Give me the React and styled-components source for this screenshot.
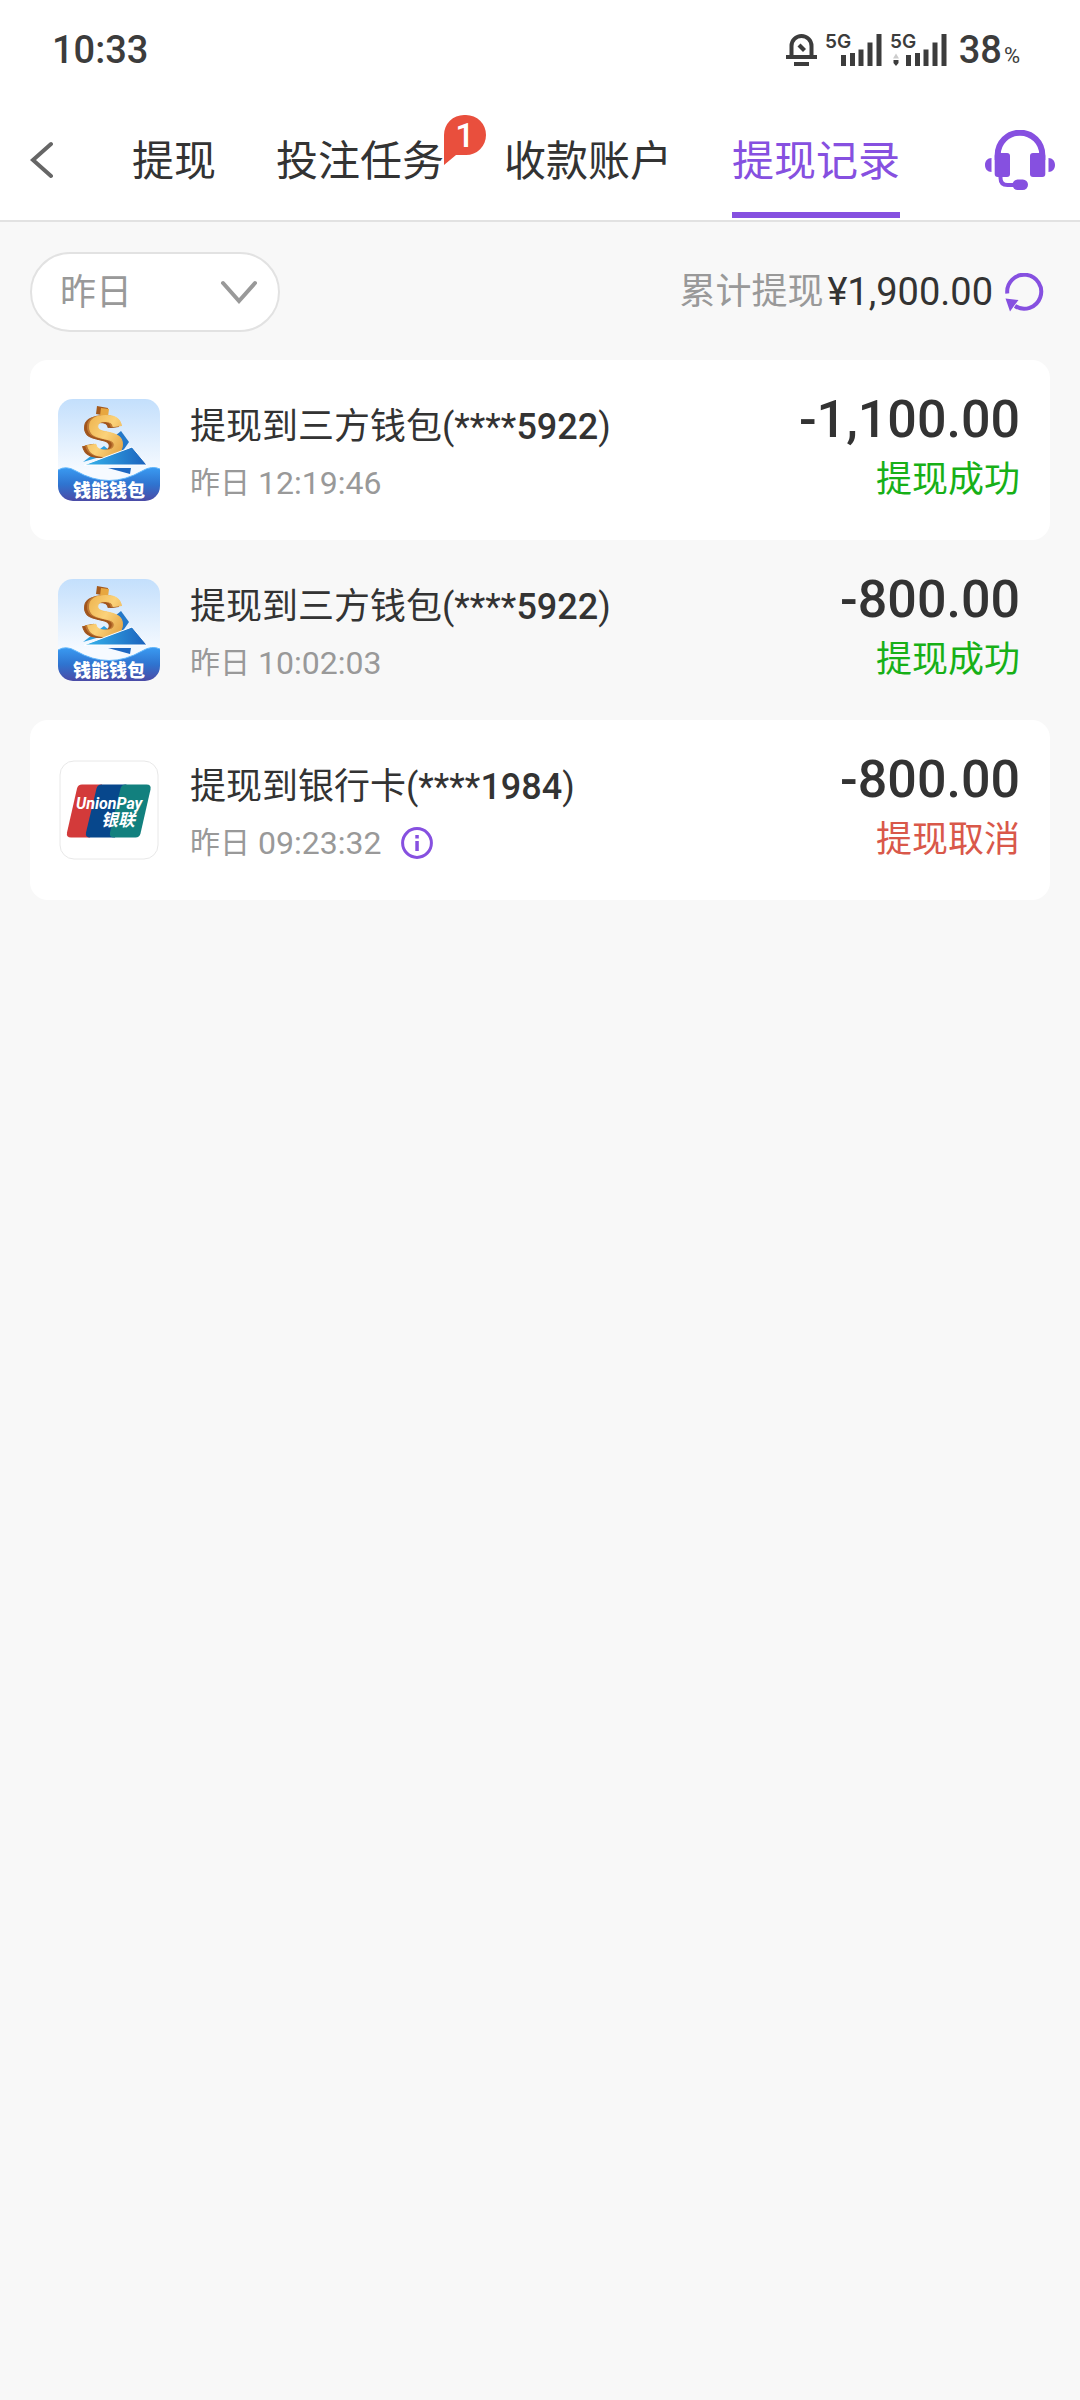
import React, { useState } from 'react';
import styled, { createGlobalStyle, ThemeProvider } from 'styled-components';

const theme = {
  purple: '#8650e0',
  red: '#e94f3d',
  cancel: '#d9584a',
  green: '#17b017',
  dark: '#333333',
  grey: '#999999',
  line: '#e2e2e2',
  page: '#f8f8f8',
};

const GlobalStyle = createGlobalStyle`
  * {
    box-sizing: border-box;
  }

  body {
    margin: 0;
    background: ${theme.page};
    color: ${theme.dark};
    font-family: Roboto, 'Noto Sans CJK SC', sans-serif;
  }

  button,
  select {
    padding: 0;
    border: 0;
    background: none;
    color: inherit;
    font: inherit;
    cursor: pointer;
  }

  svg {
    display: block;
    flex: none;
  }
`;

const StyledStatusBar = styled.div`
  display: flex;
  align-items: center;
  justify-content: space-between;
  height: 100px;
  padding: 0 60px 0 52px;
  background: #fff;
  color: #3c3c3c;
  font-size: 38px;
  font-weight: 500;
  line-height: 40px;

  .indicators {
    display: flex;
    align-items: center;
    gap: 8px;
  }

  .battery {
    display: flex;
    align-items: baseline;
    gap: 2px;
    margin-left: 4px;
  }

  .percent {
    font-size: 22px;
    font-weight: 400;
    line-height: 22px;
  }
`;

const StyledHeader = styled.header`
  display: flex;
  align-items: center;
  height: 122px;
  padding: 0 25px 0 30px;
  border-bottom: 2px solid ${({ theme }) => theme.line};
  background: #fff;

  .back {
    width: 100px;
  }

  .service {
    margin-left: auto;
  }
`;

const StyledTabs = styled.nav`
  display: flex;
  align-self: stretch;
  gap: 60px;
  padding: 0 2px;
`;

const StyledTab = styled.button`
  position: relative;
  height: 120px;
  padding-top: 4px;
  color: ${({ theme, $active }) => ($active ? theme.purple : theme.dark)};
  font-size: 42px;
  line-height: 60px;
  white-space: nowrap;

  &::after {
    content: '';
    position: absolute;
    right: 0;
    bottom: 2px;
    left: 0;
    height: 6px;
    background: ${({ theme, $active }) => ($active ? theme.purple : 'transparent')};
  }
`;

const StyledBadge = styled.span`
  position: absolute;
  top: 15px;
  left: 100%;
  width: 42px;
  height: 50px;
  color: #fff;
  font-size: 34px;
  font-weight: 500;
  line-height: 40px;
  text-align: center;

  svg {
    position: absolute;
    inset: 0;
  }

  span {
    position: relative;
  }
`;

const StyledFilterBar = styled.div`
  display: flex;
  align-items: center;
  justify-content: space-between;
  padding: 30px 36px 28px 30px;
`;

const StyledSelect = styled.label`
  display: grid;
  align-items: center;
  width: 250px;
  height: 80px;
  border: 2px solid ${({ theme }) => theme.line};
  border-radius: 40px;
  background: #fff;

  select,
  svg {
    grid-area: 1 / 1;
  }

  select {
    width: 100%;
    height: 100%;
    padding: 2px 28px 0;
    border-radius: 40px;
    outline: none;
    appearance: none;
    color: ${({ theme }) => theme.grey};
    font-size: 36px;
  }

  svg {
    justify-self: end;
    margin-right: 20px;
    pointer-events: none;
  }
`;

const StyledTotal = styled.div`
  display: flex;
  align-items: center;
  color: ${({ theme }) => theme.grey};
  font-size: 36px;
  line-height: 52px;

  strong {
    margin: 0 12px 0 4px;
    color: ${({ theme }) => theme.dark};
    font-size: 38px;
    font-weight: 400;
  }
`;

const StyledList = styled.ul`
  margin: 0;
  padding: 0 30px;
  list-style: none;
`;

const StyledRecord = styled.li`
  display: flex;
  align-items: center;
  height: 180px;
  padding: 0 30px 0 28px;
  border-radius: 18px;

  &:nth-child(odd) {
    background: #fff;
  }

  .info {
    flex: 1;
    margin-left: 30px;
    padding-top: 10px;
  }

  .result {
    text-align: right;
  }
`;

const StyledTitle = styled.div`
  font-size: 36px;
  line-height: 56px;

  b {
    font-weight: 500;
  }
`;

const StyledTime = styled.div`
  display: flex;
  align-items: center;
  gap: 8px;
  color: ${({ theme }) => theme.grey};
  font-size: 30px;
  line-height: 56px;

  time {
    font-size: 32px;
  }

  button {
    margin-left: 12px;
  }
`;

const StyledAmount = styled.div`
  font-size: 52px;
  font-weight: 500;
  line-height: 60px;
`;

const StyledState = styled.div`
  color: ${({ theme, $cancelled }) => ($cancelled ? theme.cancel : theme.green)};
  font-size: 36px;
  line-height: 60px;
`;

const MuteIcon = () => (
  <svg width="31" height="32" viewBox="0 0 31 32" fill="#3c3c3c">
    <path d="M5.500 22V12a10 10 0 0 1 20 0v10" fill="none" stroke="#3c3c3c" strokeWidth="4" />
    <path d="M0 21h31v4H0zM8 28h15v4H8z" />
    <path d="M11.500 12.500l3-3 5.500 5.500-3 3z" />
  </svg>
);

const SignalIcon = ({ activity }) => (
  <svg width="57" height="44" viewBox="0 -6 57 44" fill="#3c3c3c">
    <text x="0" y="14" fontFamily="Inter, sans-serif" fontSize="19" fontWeight="600">
      5G
    </text>
    {activity && (
      <>
        <path d="M3 24.500l3-5 3 5z" fill="#cccccc" />
        <path d="M3.500 26h5v3L6 32l-2.500-3z" />
      </>
    )}
    <path d="M16 21h5v11h-5zM25 19h5v13h-5zM33.500 15.500h5v16.500h-5zM42.500 8.500h5v23.500h-5zM51.500 0h5v32h-5z" />
  </svg>
);

const BackIcon = () => (
  <svg width="24" height="38" viewBox="0 0 24 38" fill="none">
    <path d="M21 3L3 19l18 16" stroke="#666666" strokeWidth="4" strokeLinecap="round" />
  </svg>
);

const HeadsetIcon = () => (
  <svg width="70" height="60" viewBox="0 0 70 60" fill={theme.purple}>
    <path
      d="M12.700 30v-5a22.300 22.300 0 0 1 44.600 0v5"
      fill="none"
      stroke={theme.purple}
      strokeWidth="6"
    />
    <rect x="9.700" y="23" width="15.300" height="24" rx="3" />
    <rect x="45" y="23" width="15.300" height="24" rx="3" />
    <path d="M6.500 28v14C2.500 42 0 39 0 35s2.500-7 6.500-7zM63.500 28v14c4 0 6.500-3 6.500-7s-2.500-7-6.500-7z" />
    <path d="M15.500 46v2q0 7 7 7H30" fill="none" stroke={theme.purple} strokeWidth="4" />
    <rect x="27.500" y="49.500" width="15.500" height="10.500" rx="5.200" />
  </svg>
);

const ArrowDownIcon = () => (
  <svg width="38" height="24" viewBox="0 0 38 24" fill="none">
    <path d="M3 3l16 18L35 3" stroke="#999999" strokeWidth="4" strokeLinecap="round" />
  </svg>
);

const RefreshIcon = () => (
  <svg width="39" height="39" viewBox="0 0 39 39">
    <path d="M2.300 20.500A17 17 0 1 1 10 33" fill="none" stroke={theme.purple} strokeWidth="4" />
    <path d="M.5 25.500l13 1.500-3.500 4.500-5 7z" fill={theme.purple} />
  </svg>
);

const InfoIcon = () => (
  <svg width="32" height="32" viewBox="0 0 32 32" fill={theme.purple}>
    <circle cx="16" cy="16" r="14.400" fill="none" stroke={theme.purple} strokeWidth="3" />
    <path d="M14.300 8h3.500v3.500h-3.500zM14.300 14h3.500v10h-3.500z" />
  </svg>
);

const StyledCoin = styled.text`
  font-family: 'Liberation Sans', sans-serif;
  font-size: 58px;
  font-weight: 700;
  filter: drop-shadow(-2px 0 0 #c07a35) drop-shadow(-3px 1px 0 #a0541c);
`;

const WalletLogo = () => (
  <svg width="102" height="102" viewBox="0 0 102 102">
    <defs>
      <linearGradient id="sky" x1="0" y1="0" x2="0" y2="1">
        <stop offset="0" stopColor="#c3dffc" />
        <stop offset="0.7" stopColor="#f6faff" />
      </linearGradient>
      <linearGradient id="wave" x1="0" y1="0" x2="0" y2="1">
        <stop offset="0" stopColor="#3a9bf2" />
        <stop offset="0.5" stopColor="#2f74d0" />
        <stop offset="1" stopColor="#4b4ba6" />
      </linearGradient>
      <linearGradient id="sail" x1="0" y1="0" x2="1" y2="0">
        <stop offset="0" stopColor="#35b4ec" />
        <stop offset="1" stopColor="#1c62bd" />
      </linearGradient>
      <linearGradient id="gold" x1="0" y1="0" x2="1" y2="1">
        <stop offset="0" stopColor="#e9a93f" />
        <stop offset="0.5" stopColor="#fbd27a" />
        <stop offset="1" stopColor="#d98f2b" />
      </linearGradient>
      <clipPath id="tile">
        <rect width="102" height="102" rx="15" />
      </clipPath>
    </defs>
    <g clipPath="url(#tile)">
      <rect width="102" height="102" fill="url(#sky)" />
      <path d="M51 42l12-10 8 11-9 13z" fill="#2478c8" />
      <path d="M25 63l21-16 9 7z" fill="#2b9fe0" />
      <path d="M39 7l11 2-1 8-11-2z" fill="#a5591c" />
      <path d="M43 9l8 1-1 8-8-1z" fill="#e7a740" />
      <StyledCoin x="28" y="57" fill="url(#gold)" stroke="url(#gold)">
        S
      </StyledCoin>
      <path d="M26 66l48-18 15 18z" fill="url(#sail)" stroke="#ffffff" strokeWidth="1" />
      <path d="M50 69h23l-1 6z" fill="#2069c2" />
      <path d="M0 71q8-5 18 1 33 19 66 0 10-6 18-2v32H0z" fill="url(#wave)" />
      <path d="M0 71q8-5 18 1 33 19 66 0 10-6 18-2" fill="none" stroke="#64b8fb" />
      <text
        x="51"
        y="98"
        fill="#ffffff"
        fontFamily="'Noto Sans CJK SC', sans-serif"
        fontSize="18"
        fontWeight="900"
        textAnchor="middle"
      >
        钱能钱包
      </text>
    </g>
  </svg>
);

const UnionPayLogo = () => (
  <svg width="102" height="102" viewBox="0 0 102 102">
    <rect x="2" y="2" width="98" height="98" rx="14" fill="#ffffff" stroke="#e8e8e8" />
    <path d="M24 25.500h20L32 78.500H13q-5 0-4-5l10-44q1-4 5-4z" fill="#d33a3a" />
    <path d="M43.500 25.500h25L57 78.500H32q-5 0-4-5l10.500-44q1-4 5-4z" fill="#07478c" />
    <path d="M67.500 25.500h21q5 0 4 5l-10 44q-1 4-5 4H56q-5 0-4-5l10.500-44q1-4 5-4z" fill="#12807e" />
    <g fill="#ffffff" fontStyle="italic" fontWeight="700">
      <text x="18" y="50" fontFamily="Roboto, sans-serif" fontSize="16">
        UnionPay
      </text>
      <text x="43" y="67" fontFamily="'Noto Sans CJK SC', sans-serif" fontSize="17">
        银联
      </text>
    </g>
  </svg>
);

const tabs = [
  { name: '提现' },
  { name: '投注任务', count: 1 },
  { name: '收款账户' },
  { name: '提现记录' },
];

const records = [
  { to: '三方钱包', tail: '5922', time: '12:19:46', amount: '-1,100.00', state: '提现成功' },
  { to: '三方钱包', tail: '5922', time: '10:02:03', amount: '-800.00', state: '提现成功' },
  {
    to: '银行卡',
    tail: '1984',
    time: '09:23:32',
    amount: '-800.00',
    state: '提现取消',
    cancelled: true,
  },
];

const Record = ({ to, tail, time, amount, state, cancelled }) => (
  <StyledRecord>
    {to === '银行卡' ? <UnionPayLogo /> : <WalletLogo />}
    <div className="info">
      <StyledTitle>
        提现到{to}(****<b>{tail}</b>)
      </StyledTitle>
      <StyledTime>
        昨日 <time>{time}</time>
        {cancelled && (
          <button type="button" aria-label="详情">
            <InfoIcon />
          </button>
        )}
      </StyledTime>
    </div>
    <div className="result">
      <StyledAmount>{amount}</StyledAmount>
      <StyledState $cancelled={cancelled}>{state}</StyledState>
    </div>
  </StyledRecord>
);

const App = () => {
  const [active, setActive] = useState('提现记录');

  return (
    <ThemeProvider theme={theme}>
      <GlobalStyle />
      <StyledStatusBar>
        <span>10:33</span>
        <div className="indicators">
          <MuteIcon />
          <SignalIcon />
          <SignalIcon activity />
          <span className="battery">
            38<span className="percent">%</span>
          </span>
        </div>
      </StyledStatusBar>

      <StyledHeader>
        <button type="button" className="back" aria-label="返回">
          <BackIcon />
        </button>
        <StyledTabs>
          {tabs.map(({ name, count }) => (
            <StyledTab
              key={name}
              type="button"
              $active={name === active}
              onClick={() => setActive(name)}
            >
              {name}
              {count && (
                <StyledBadge>
                  <svg width="42" height="50" viewBox="0 0 42 50">
                    <path
                      d="M0 50V20A20 20 0 0 1 20 0h2a20 20 0 0 1 0 40H12z"
                      fill={theme.red}
                    />
                  </svg>
                  <span>{count}</span>
                </StyledBadge>
              )}
            </StyledTab>
          ))}
        </StyledTabs>
        <button type="button" className="service" aria-label="客服">
          <HeadsetIcon />
        </button>
      </StyledHeader>

      <main>
        <StyledFilterBar>
          <StyledSelect>
            <select aria-label="日期" defaultValue="昨日">
              <option>昨日</option>
            </select>
            <ArrowDownIcon />
          </StyledSelect>
          <StyledTotal>
            累计提现
            <strong>¥1,900.00</strong>
            <button type="button" aria-label="刷新">
              <RefreshIcon />
            </button>
          </StyledTotal>
        </StyledFilterBar>

        <StyledList>
          {records.map(record => (
            <Record key={record.time} {...record} />
          ))}
        </StyledList>
      </main>
    </ThemeProvider>
  );
};

export default App;
